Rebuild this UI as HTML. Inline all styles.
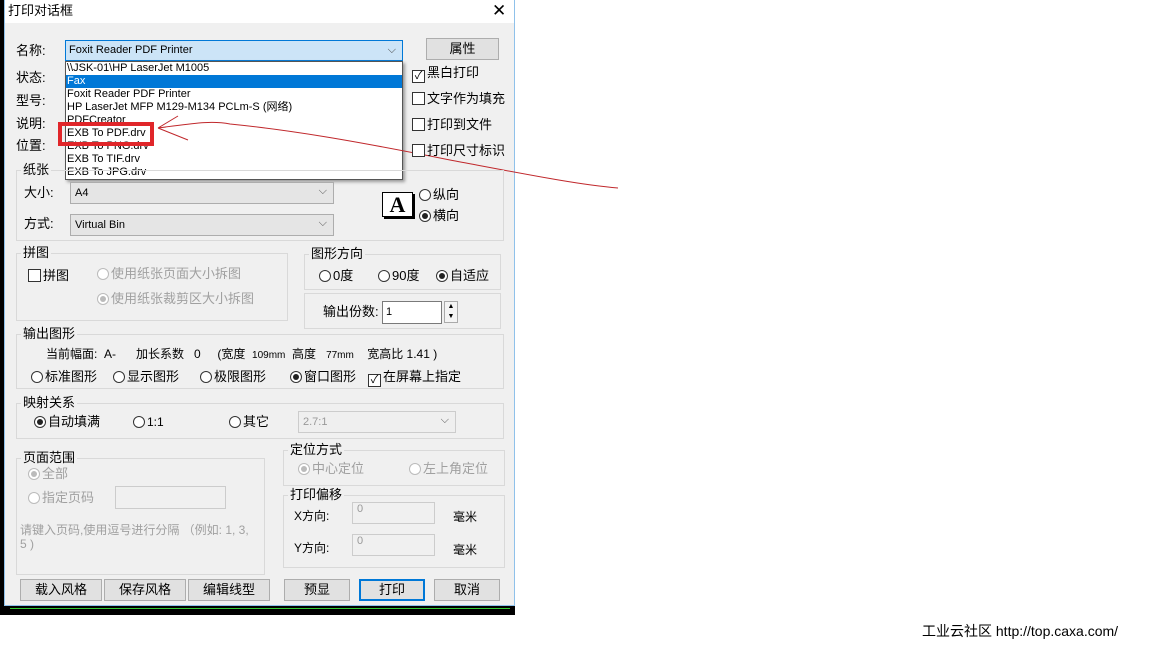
<!DOCTYPE html><html><head><meta charset="utf-8"><style>
*{box-sizing:border-box}
body{margin:0;width:1152px;height:648px;background:#fff;position:relative;overflow:hidden;font-family:"Liberation Sans","Noto Sans CJK SC",sans-serif;font-size:12px;color:#000}
.a{position:absolute;white-space:nowrap;line-height:16px}
.g{position:absolute;border:1px solid #d9d9d9}
.gl{position:absolute;background:#f0f0f0;padding:0 2px;top:-9px;left:4px;line-height:16px}
.btn{position:absolute;height:22px;background:#e1e1e1;border:1px solid #adadad;text-align:center;line-height:20px;font-size:13px}
.sel{position:absolute;height:22px;background:#e5e5e5;border:1px solid #adadad;padding-left:4px;line-height:20px;font-size:11px}
.sel:after{content:"⌵";position:absolute;right:6px;top:-2px;color:#555;font-size:11px}
.r{display:inline-block;width:12px;height:12px;border:1px solid #333;border-radius:50%;background:#fff;vertical-align:-2px;margin-right:2px;position:relative}
.r.on:after{content:"";position:absolute;left:2px;top:2px;width:6px;height:6px;border-radius:50%;background:#222}
.r.dis{border-color:#bbb}.r.dis.on:after{background:#bbb}
.c{display:inline-block;width:13px;height:13px;border:1px solid #333;background:#fff;vertical-align:-2px;margin-right:2px;position:relative;font-size:11px;line-height:11px;text-align:center}
.dim{color:#a0a0a0}
.inp{position:absolute;background:#fff;border:1px solid #7a7a7a;font-size:11px;padding-left:3px}
.inpd{position:absolute;background:#f0f0f0;border:1px solid #ccc;font-size:11px;color:#999;padding-left:4px}
.li{height:13px;line-height:13px;padding-left:1px;overflow:hidden}
</style></head><body>
<div class="a" style="left:0;top:0;width:515px;height:615px;background:#000"></div>
<div class="a" style="left:4px;top:0;width:511px;height:606px;background:#f0f0f0;border:1px solid #8fc1ea;border-top:none"></div>
<div class="a" style="left:5px;top:0;width:509px;height:23px;background:#fff"></div>
<div class="a" style="left:8px;top:3px;font-size:13px">打印对话框</div>
<div class="a" style="left:492px;top:3px;font-size:17px;font-weight:300">✕</div>

<div class="a" style="left:16px;top:43px;font-size:13px">名称:</div>
<div class="a" style="left:16px;top:70px;font-size:13px">状态:</div>
<div class="a" style="left:16px;top:93px;font-size:13px">型号:</div>
<div class="a" style="left:16px;top:116px;font-size:13px">说明:</div>
<div class="a" style="left:16px;top:138px;font-size:13px">位置:</div>
<div class="a" style="left:65px;top:40px;width:338px;height:21px;background:#cce4f7;border:1px solid #0078d7;font-size:11px;line-height:19px;padding-left:3px">Foxit Reader PDF Printer<span style="position:absolute;right:6px;color:#444">⌵</span></div>
<div class="a" style="left:65px;top:61px;width:338px;height:119px;background:#fff;border:1px solid #555;font-size:11px;line-height:13px;box-shadow:2px 2px 3px #999;overflow:hidden">
<div class="li">\\JSK-01\HP LaserJet M1005</div>
<div class="li" style="background:#0078d7;color:#fff">Fax</div>
<div class="li">Foxit Reader PDF Printer</div>
<div class="li">HP LaserJet MFP M129-M134 PCLm-S (网络)</div>
<div class="li">PDFCreator</div>
<div class="li">EXB To PDF.drv</div>
<div class="li">EXB To PNG.drv</div>
<div class="li">EXB To TIF.drv</div>
<div class="li">EXB To JPG.drv</div>
</div>
<div class="a" style="left:58px;top:122px;width:96px;height:24px;border:4px solid #e0262a"></div>
<svg class="a" style="left:150px;top:110px" width="470" height="85"><path d="M8 18 L28 6 M8 18 L38 30 M8 18 C40 14 60 10 80 14 C140 20 200 30 300 50 C380 65 430 75 468 78" fill="none" stroke="#c0282c" stroke-width="1"/></svg>

<div class="btn" style="left:426px;top:38px;width:73px">属性</div>
<div class="a" style="left:412px;top:65px;font-size:13px"><span class="c">✓</span>黑白打印</div>
<div class="a" style="left:412px;top:91px;font-size:13px"><span class="c"></span>文字作为填充</div>
<div class="a" style="left:412px;top:117px;font-size:13px"><span class="c"></span>打印到文件</div>
<div class="a" style="left:412px;top:143px;font-size:13px"><span class="c"></span>打印尺寸标识</div>

<div class="g" style="left:16px;top:170px;width:488px;height:71px"><span class="gl" style="font-size:13px">纸张</span></div>
<div class="a" style="left:24px;top:185px;font-size:13px">大小:</div>
<div class="a" style="left:24px;top:216px;font-size:13px">方式:</div>
<div class="sel" style="left:70px;top:182px;width:264px">A4</div>
<div class="sel" style="left:70px;top:214px;width:264px">Virtual Bin</div>
<div class="a" style="left:382px;top:192px;width:31px;height:25px;border:1px solid #000;background:#fff;font-family:'Liberation Serif',serif;font-size:22px;font-weight:bold;text-align:center;line-height:23px;box-shadow:2px 2px 0 #000">A</div>
<div class="a" style="left:419px;top:187px;font-size:13px"><span class="r"></span>纵向</div>
<div class="a" style="left:419px;top:208px;font-size:13px"><span class="r on"></span>横向</div>

<div class="g" style="left:16px;top:253px;width:272px;height:68px"><span class="gl" style="font-size:13px">拼图</span></div>
<div class="a" style="left:28px;top:268px;font-size:13px"><span class="c"></span>拼图</div>
<div class="a dim" style="left:97px;top:266px;font-size:13px"><span class="r dis"></span>使用纸张页面大小拆图</div>
<div class="a dim" style="left:97px;top:291px;font-size:13px"><span class="r dis on"></span>使用纸张裁剪区大小拆图</div>

<div class="g" style="left:304px;top:254px;width:197px;height:36px"><span class="gl" style="font-size:13px">图形方向</span></div>
<div class="a" style="left:319px;top:268px;font-size:13px"><span class="r"></span>0度</div>
<div class="a" style="left:378px;top:268px;font-size:13px"><span class="r"></span>90度</div>
<div class="a" style="left:436px;top:268px;font-size:13px"><span class="r on"></span>自适应</div>
<div class="g" style="left:304px;top:293px;width:197px;height:36px"></div>
<div class="a" style="left:323px;top:304px;font-size:13px">输出份数:</div>
<div class="inp" style="left:382px;top:301px;width:60px;height:23px;line-height:21px">1</div>
<div class="a" style="left:444px;top:301px;width:14px;height:22px;border:1px solid #aaa;background:#f4f4f4;font-size:7px;text-align:center;line-height:10px">▲<br>▼</div>

<div class="g" style="left:16px;top:334px;width:488px;height:55px"><span class="gl" style="font-size:13px">输出图形</span></div>
<div class="a" style="left:46px;top:346px;font-size:12px">当前幅面: &nbsp;A- &nbsp;&nbsp;&nbsp;&nbsp;&nbsp;加长系数 &nbsp;&nbsp;0 &nbsp;&nbsp;&nbsp;&nbsp;(宽度 &nbsp;<span style="font-size:10px">109mm</span> &nbsp;高度 &nbsp;&nbsp;<span style="font-size:10px">77mm</span> &nbsp;&nbsp;&nbsp;宽高比 1.41 )</div>
<div class="a" style="left:31px;top:369px;font-size:13px"><span class="r"></span>标准图形</div>
<div class="a" style="left:113px;top:369px;font-size:13px"><span class="r"></span>显示图形</div>
<div class="a" style="left:200px;top:369px;font-size:13px"><span class="r"></span>极限图形</div>
<div class="a" style="left:290px;top:369px;font-size:13px"><span class="r on"></span>窗口图形</div>
<div class="a" style="left:368px;top:369px;font-size:13px"><span class="c">✓</span>在屏幕上指定</div>

<div class="g" style="left:16px;top:403px;width:488px;height:36px"><span class="gl" style="font-size:13px">映射关系</span></div>
<div class="a" style="left:34px;top:414px;font-size:13px"><span class="r on"></span>自动填满</div>
<div class="a" style="left:133px;top:414px;font-size:12px"><span class="r"></span>1:1</div>
<div class="a" style="left:229px;top:414px;font-size:13px"><span class="r"></span>其它</div>
<div class="sel" style="left:298px;top:411px;width:158px;background:#efefef;border-color:#ccc;color:#999">2.7:1</div>

<div class="g" style="left:16px;top:458px;width:249px;height:117px"><span class="gl" style="font-size:13px">页面范围</span></div>
<div class="a dim" style="left:28px;top:466px;font-size:13px"><span class="r dis on"></span>全部</div>
<div class="a dim" style="left:28px;top:490px;font-size:13px"><span class="r dis"></span>指定页码</div>
<div class="inpd" style="left:115px;top:486px;width:111px;height:23px"></div>
<div class="a dim" style="left:20px;top:523px;font-size:12px;line-height:14px">请键入页码,使用逗号进行分隔 （例如: 1, 3,<br>5 )</div>

<div class="g" style="left:283px;top:450px;width:222px;height:36px"><span class="gl" style="font-size:13px">定位方式</span></div>
<div class="a dim" style="left:298px;top:461px;font-size:13px"><span class="r dis on"></span>中心定位</div>
<div class="a dim" style="left:409px;top:461px;font-size:13px"><span class="r dis"></span>左上角定位</div>
<div class="g" style="left:283px;top:495px;width:222px;height:73px"><span class="gl" style="font-size:13px">打印偏移</span></div>
<div class="a" style="left:294px;top:508px;font-size:12px">X方向:</div>
<div class="a" style="left:294px;top:540px;font-size:12px">Y方向:</div>
<div class="inpd" style="left:352px;top:502px;width:83px;height:22px">0</div>
<div class="inpd" style="left:352px;top:534px;width:83px;height:22px">0</div>
<div class="a" style="left:453px;top:509px;font-size:12px">毫米</div>
<div class="a" style="left:453px;top:542px;font-size:12px">毫米</div>

<div class="btn" style="left:20px;top:579px;width:82px">载入风格</div>
<div class="btn" style="left:104px;top:579px;width:82px">保存风格</div>
<div class="btn" style="left:188px;top:579px;width:82px">编辑线型</div>
<div class="btn" style="left:284px;top:579px;width:66px">预显</div>
<div class="btn" style="left:359px;top:579px;width:66px;border:2px solid #0078d7;line-height:18px">打印</div>
<div class="btn" style="left:434px;top:579px;width:66px">取消</div>

<div class="a" style="left:10px;top:608px;width:500px;height:1px;background:#3c3"></div>
<div class="a" style="left:922px;top:623px;font-size:14px">工业云社区 http://top.caxa.com/</div>
</body></html>
